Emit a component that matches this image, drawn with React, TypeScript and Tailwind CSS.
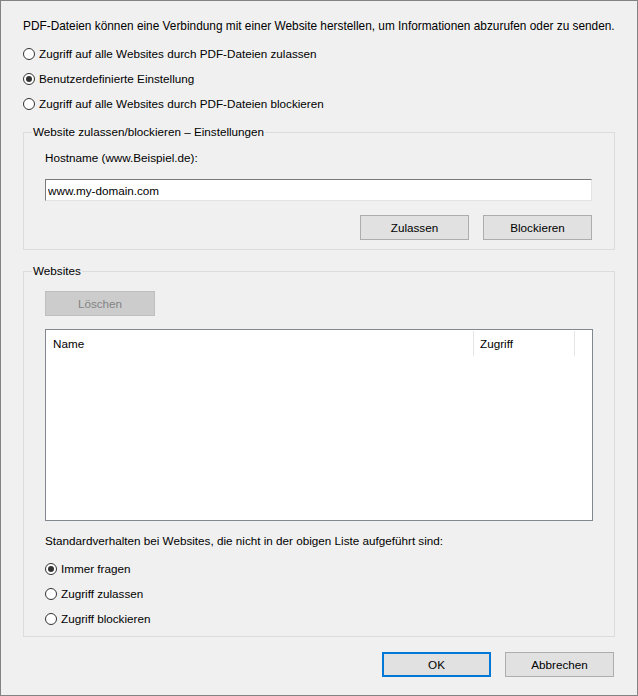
import { useState } from "react";

function Radio({ checked, label, onClick }: { checked: boolean; label: string; onClick: () => void }) {
  return (
    <div className="flex items-center h-4 gap-1 cursor-default whitespace-nowrap" onClick={onClick}>
      <span className="w-3 h-3 rounded-full border border-[#333333] bg-white flex items-center justify-center shrink-0">
        {checked && <span className="w-[6px] h-[6px] rounded-full bg-[#333333]" />}
      </span>
      <span>{label}</span>
    </div>
  );
}

function Btn({ label, disabled, primary }: { label: string; disabled?: boolean; primary?: boolean }) {
  if (disabled) {
    return (
      <button className="w-[110px] h-[25px] bg-[#cccccc] border border-[#bfbfbf] text-[#838383]" disabled>
        {label}
      </button>
    );
  }
  return (
    <button
      className={
        primary
          ? "w-[109px] h-[25px] bg-[#e1e1e1] border-2 border-[#0078d7]"
          : "w-[109px] h-[25px] bg-[#e1e1e1] border border-[#adadad]"
      }
    >
      {label}
    </button>
  );
}

export default function App() {
  const [mode, setMode] = useState(1);
  const [fallback, setFallback] = useState(0);
  const [host, setHost] = useState("www.my-domain.com");

  const modes = [
    "Zugriff auf alle Websites durch PDF-Dateien zulassen",
    "Benutzerdefinierte Einstellung",
    "Zugriff auf alle Websites durch PDF-Dateien blockieren",
  ];
  const fallbacks = ["Immer fragen", "Zugriff zulassen", "Zugriff blockieren"];

  return (
    <div className="w-[638px] h-[696px] bg-[#f0f0f0] border border-[#838383] text-black text-[11.7px] leading-4 font-['Liberation_Sans',sans-serif] px-[22px] pt-[17px]">
      <p className="h-4 whitespace-nowrap text-[11.85px]">
        PDF-Dateien können eine Verbindung mit einer Website herstellen, um Informationen abzurufen oder zu senden.
      </p>

      <div className="mt-[12px] flex flex-col gap-[9px]">
        {modes.map((m, i) => (
          <Radio key={m} label={m} checked={mode === i} onClick={() => setMode(i)} />
        ))}
      </div>

      <fieldset className="mt-[12px] border border-[#dcdcdc] px-[21px] pb-[9px]">
        <legend className="-ml-[13px] px-px whitespace-nowrap">Website zulassen/blockieren – Einstellungen</legend>
        <div className="mt-[10px] h-4">Hostname (www.Beispiel.de):</div>
        <input
          value={host}
          onChange={(e) => setHost(e.target.value)}
          className="mt-[13px] w-[547px] h-[22px] bg-white border border-t-[#7a7a7a] border-l-[#7a7a7a] border-r-[#e3e3e3] border-b-[#e3e3e3] px-[2px] outline-none"
        />
        <div className="mt-[14px] flex justify-end gap-[14px] w-[547px]">
          <Btn label="Zulassen" />
          <Btn label="Blockieren" />
        </div>
      </fieldset>

      <fieldset className="mt-[13px] border border-[#dcdcdc] px-[21px] pb-[9px]">
        <legend className="-ml-[13px] px-px">Websites</legend>
        <div className="mt-[12px]">
          <Btn label="Löschen" disabled />
        </div>
        <div className="mt-[13px] w-[548px] h-[192px] bg-white border border-[#828790]">
          <div className="flex h-[25px] mt-px">
            <div className="w-[428px] pl-[7px] flex items-center border-r border-[#e5e5e5]">Name</div>
            <div className="w-[101px] pl-[6px] flex items-center border-r border-[#e5e5e5]">Zugriff</div>
          </div>
        </div>
        <div className="mt-[12px] h-4 whitespace-nowrap">
          Standardverhalten bei Websites, die nicht in der obigen Liste aufgeführt sind:
        </div>
        <div className="mt-[12px] flex flex-col gap-[9px]">
          {fallbacks.map((f, i) => (
            <Radio key={f} label={f} checked={fallback === i} onClick={() => setFallback(i)} />
          ))}
        </div>
      </fieldset>

      <div className="mt-[15px] flex justify-end gap-[14px] pr-px">
        <Btn label="OK" primary />
        <Btn label="Abbrechen" />
      </div>
    </div>
  );
}
